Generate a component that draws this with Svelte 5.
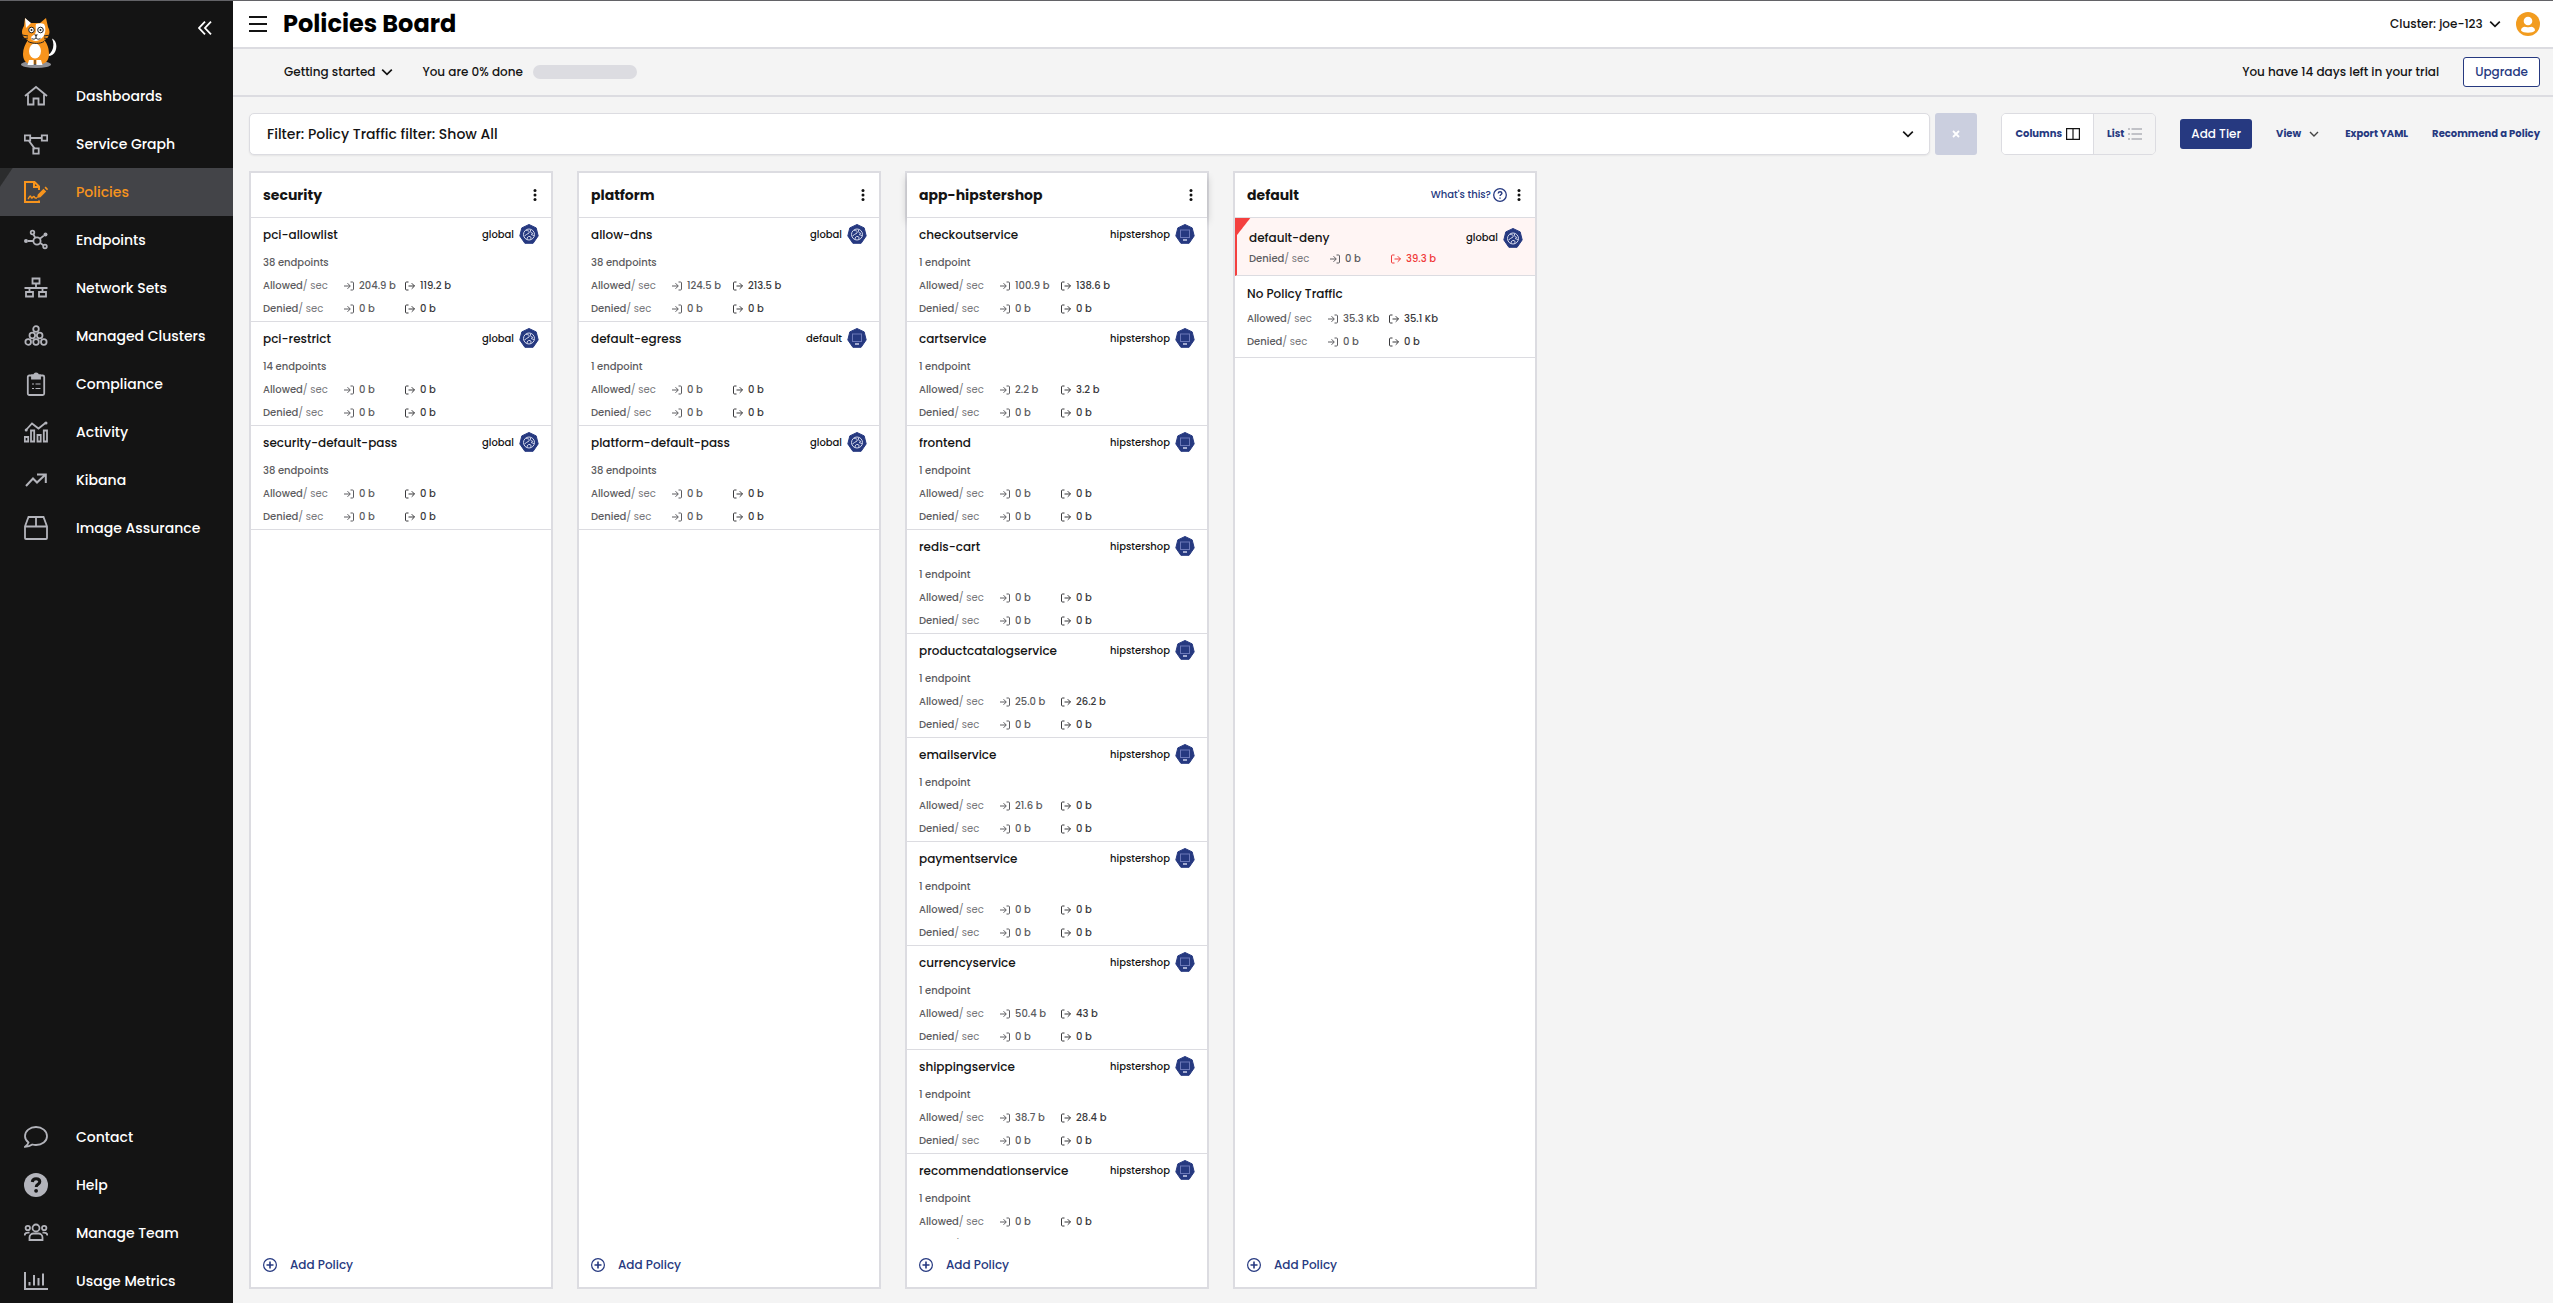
<script>
  const mainNav = [
    ['Dashboards', 'home'],
    ['Service Graph', 'graph'],
    ['Policies', 'policies'],
    ['Endpoints', 'endpoints'],
    ['Network Sets', 'network'],
    ['Managed Clusters', 'clusters'],
    ['Compliance', 'compliance'],
    ['Activity', 'activity'],
    ['Kibana', 'kibana'],
    ['Image Assurance', 'image']
  ];
  const footNav = [
    ['Contact', 'contact'],
    ['Help', 'help'],
    ['Manage Team', 'team'],
    ['Usage Metrics', 'usage']
  ];

  const card = (name, endpoints, scope, allowedIn = '0 b', allowedOut = '0 b') => ({
    name,
    endpoints,
    scope,
    rates: [
      ['Allowed', allowedIn, allowedOut],
      ['Denied', '0 b', '0 b']
    ]
  });

  const tiers = [
    {
      name: 'security',
      cards: [
        card('pci-allowlist', '38 endpoints', 'global', '204.9 b', '119.2 b'),
        card('pci-restrict', '14 endpoints', 'global'),
        card('security-default-pass', '38 endpoints', 'global')
      ]
    },
    {
      name: 'platform',
      cards: [
        card('allow-dns', '38 endpoints', 'global', '124.5 b', '213.5 b'),
        card('default-egress', '1 endpoint', 'default'),
        card('platform-default-pass', '38 endpoints', 'global')
      ]
    },
    {
      name: 'app-hipstershop',
      raised: true,
      cards: [
        card('checkoutservice', '1 endpoint', 'hipstershop', '100.9 b', '138.6 b'),
        card('cartservice', '1 endpoint', 'hipstershop', '2.2 b', '3.2 b'),
        card('frontend', '1 endpoint', 'hipstershop'),
        card('redis-cart', '1 endpoint', 'hipstershop'),
        card('productcatalogservice', '1 endpoint', 'hipstershop', '25.0 b', '26.2 b'),
        card('emailservice', '1 endpoint', 'hipstershop', '21.6 b', '0 b'),
        card('paymentservice', '1 endpoint', 'hipstershop'),
        card('currencyservice', '1 endpoint', 'hipstershop', '50.4 b', '43 b'),
        card('shippingservice', '1 endpoint', 'hipstershop', '38.7 b', '28.4 b'),
        card('recommendationservice', '1 endpoint', 'hipstershop')
      ]
    },
    {
      name: 'default',
      help: true,
      cards: [
        { name: 'default-deny', scope: 'global', alert: true, rates: [['Denied', '0 b', '39.3 b']] },
        {
          name: 'No Policy Traffic',
          plain: true,
          rates: [
            ['Allowed', '35.3 Kb', '35.1 Kb'],
            ['Denied', '0 b', '0 b']
          ]
        }
      ]
    }
  ];
</script>

{#snippet chevron(size)}
  <svg class="line" width={size} height={size} viewBox="0 0 10 10" aria-hidden="true"><path d="M1 3l4 4 4-4" stroke-width="1.4" /></svg>
{/snippet}

{#snippet navIcon(kind)}
  <svg class="line nav-icon" width="24" height="24" viewBox="0 0 24 24" aria-hidden="true">
    {#if kind === 'home'}
      <path d="M1 12L12 3l11 9M4 10.500V20.500h5.500v-6h5v6H20V10.500" />
    {:else if kind === 'graph'}
      <path d="M6 6h12M5 9l6 8" stroke-width="2" />
      <path d="M.8 3.300h5.400v5.400H.8zM17.800 3.300h5.400v5.400h-5.400zM9.300 16.300h5.400v5.400H9.300z" />
    {:else if kind === 'policies'}
      <path d="M15 20.500v1.500H1V2h9.500l4.500 4.500V10M10 2v5h5" stroke-width="2" />
      <path d="M4 19c1-1 1.500-3 2.300-3 1 0 .5 2 1.500 2s1-1.500 2-1.500.5 1.500 1.700 1.500h1.500" stroke-width="1.400" />
      <path d="M13 18l.8-3.500 5.700-5.700 2.700 2.700-5.700 5.700zM20.500 7.800l1.200-1.200 2.500 2.500-1.200 1.200z" fill="currentColor" stroke="none" />
    {:else if kind === 'endpoints'}
      <circle cx="13" cy="13" r="3.600" />
      <circle cx="8.500" cy="4.500" r="1.800" />
      <circle cx="21" cy="18.500" r="1.800" />
      <circle cx="21.500" cy="6.500" r="2" fill="currentColor" stroke="none" />
      <circle cx="2" cy="13" r="2" fill="currentColor" stroke="none" />
      <path d="M9.300 6.200l2 3.700M15.800 10.800l4-3.200M16.200 15l3.200 2.300M4 13h5.500" />
    {:else if kind === 'network'}
      <path d="M8.500 2.500h7v5h-7zM12 8v4M.5 12h23M5.500 12v4M18.500 12v4M2 16h7v4.500H2zM15 16h7v4.500h-7z" />
    {:else if kind === 'clusters'}
      <circle cx="12" cy="5" r="2.800" /><circle cx="8.300" cy="11.500" r="2.800" /><circle cx="15.700" cy="11.500" r="2.800" />
      <circle cx="4.200" cy="18" r="2.800" /><circle cx="12" cy="18" r="2.800" /><circle cx="19.800" cy="18" r="2.800" />
    {:else if kind === 'compliance'}
      <rect x="3.800" y="3.500" width="16.400" height="19.500" rx="1.500" />
      <path d="M8 6.500v-3h2a2 2 0 0 1 4 0h2v3z" fill="currentColor" />
      <path d="M8 12h2M11.500 12h5M8 16.500h2M11.500 16.500h5" stroke-width="1.200" />
    {:else if kind === 'activity'}
      <path d="M2 10l6-6.500 6.500 5L22 2.500" stroke-width="1.800" />
      <circle cx="2.200" cy="10" r="1.500" fill="currentColor" stroke="none" /><circle cx="22" cy="3" r="1.500" fill="currentColor" stroke="none" />
      <path d="M.8 17h3.400v4.500H.8zM7 10.500h3.200v11H7zM13.500 15h3.200v6.500h-3.200zM19.800 10.500h3.200v11h-3.200z" />
    {:else if kind === 'kibana'}
      <path d="M2 18l7-7.500 4 4L21.500 6.500M13 6.500h8.800V15" stroke-width="2" />
    {:else if kind === 'image'}
      <path d="M1 10.500V22a1 1 0 0 0 1 1h20a1 1 0 0 0 1-1V10.500L19.500 1h-15zM1 10.500h22M12 1v9.500" />
    {:else if kind === 'contact'}
      <path d="M4.500 17.500C2.300 15.800 1 13.500 1 11.200 1 6 6 2 12 2s11 4 11 9.200-5 8.800-11 8.800c-1.300 0-2.600-.2-3.700-.5C6.300 21 4 21.800 1 21.800c2-1.300 3-2.700 3.500-4.300z" />
    {:else if kind === 'help'}
      <circle cx="12" cy="12" r="12" fill="currentColor" stroke="none" />
      <path d="M8.300 9c.2-2 1.700-3.200 3.800-3.200s3.700 1.200 3.700 3c0 2.600-3.600 2.500-3.600 5.200" stroke="#141414" stroke-width="3" />
      <circle cx="12.100" cy="17.800" r="1.900" fill="#141414" stroke="none" />
    {:else if kind === 'team'}
      <circle cx="12" cy="7" r="3.500" /><circle cx="3.800" cy="7" r="2.200" /><circle cx="20.200" cy="7" r="2.200" />
      <path d="M5.500 19v-2.500c0-2.500 2-4 4-4h5c2 0 4 1.500 4 4V19zM.6 14.500c0-1.700 1.200-2.800 3.400-2.800h1.500M23.400 14.500c0-1.700-1.200-2.800-3.400-2.800h-1.500" />
    {:else}
      <path d="M1 3v17h23" stroke-width="2" />
      <path d="M5.500 13v3.500M10 6v10.500M14.500 9v7.500M19 4.500v12" stroke-width="2" />
    {/if}
  </svg>
{/snippet}

{#snippet scopeIcon(scope)}
  <svg class="scope-icon" width="20" height="20" viewBox="0 0 20 20" aria-hidden="true">
    <path d="M10 .5l7.200 3.400 2 8L14.100 19.300H5.900L.8 11.900l2-8z" fill="#263980" stroke="#263980" stroke-linejoin="round" />
    {#if scope === 'global'}
      <g fill="none" stroke="#d5d9ec">
        <circle cx="10" cy="10.500" r="5.500" />
        <path d="M7 6.500c2 0 4 .5 3 2.500l-2.500 1.500-2 1.500M11.500 6c-.5 2.500 1 3 2.500 3.500M8 15.500c0-2 1-3.500 3-3 1.500.5 1 2 .5 3M12 10.500l3 1" />
      </g>
    {:else}
      <rect x="5.500" y="6" width="9" height="7.500" fill="none" stroke="#6b78b8" />
      <path d="M8 16h4" stroke="#c3c9e4" stroke-width="1.600" />
    {/if}
  </svg>
{/snippet}

{#snippet arrowIn()}
  <svg class="line" width="10" height="10" viewBox="0 0 10 10" aria-hidden="true"><path d="M0 5h6M3.500 2.200L6.300 5 3.500 7.800M6.500 1h2q1 0 1 1v6q0 1-1 1h-2" /></svg>
{/snippet}

{#snippet arrowOut()}
  <svg class="line" width="10" height="10" viewBox="0 0 10 10" aria-hidden="true"><path d="M3.500 5h6M6.700 2.200L9.500 5 6.700 7.800M3.500 1h-2q-1 0-1 1v6q0 1 1 1h2" /></svg>
{/snippet}

<div class="app">
  <aside class="sidebar">
    <div class="brand">
      <svg width="36" height="52" viewBox="0 0 36 52" role="img" aria-label="Home">
        <ellipse cx="15" cy="47.500" rx="15" ry="3.500" fill="#8f9096" />
        <path d="M27 38c5-3 7-10 4-16.500 4 2 5.500 7 3.500 12.500-1.500 3.500-4 5-7.500 5z" fill="#fff" />
        <path d="M4 1l5 5h10l6-5 2 9c2 3 2 7 0 10-1 2-3 3-4 3 4 4 5 10 5 14 0 5-2 9-7 10H9c-5-1-7-5-7-10 0-5 2-10 5-14-3-1-6-4-6-8 0-3 1-4 2-6z" fill="#f7941d" />
        <path d="M4 1l6 5-5 5z" fill="#fff" />
        <path d="M15 7c3-1 6-1 8 0 2 3 2 9-1 13-2 2-5 4-7 4s-5-1-5-3 3-3 4-4c2-3 0-7 1-10z" fill="#fff" />
        <ellipse cx="14" cy="34" rx="6" ry="7.500" fill="#fff" />
        <path d="M8 43h4.500v5H6.500zM15.500 43H20l1.500 5h-6z" fill="#fff" />
        <g fill="#fff" stroke="#222"><circle cx="10.500" cy="13" r="2.800" /><circle cx="19.500" cy="13" r="2.800" /></g>
        <circle cx="10.500" cy="13" r="1" fill="#222" /><circle cx="19.500" cy="13" r="1" fill="#222" />
        <path d="M13 17.500h4l-2 2z" fill="#222" />
        <path d="M15 19v2M15 21c-2 2-4 1-4.500 0M15 21c2 2 4 1 4.500 0M1 18l6 1M1 22l6-1M29 18l-6 1M29 22l-6-1M7 24.500c5 2.500 12 2.500 16 0M14 43v5" fill="none" stroke="#222" />
      </svg>
      <button class="bare collapse" aria-label="Collapse menu">
        <svg class="line" width="14" height="14" viewBox="0 0 14 14" aria-hidden="true"><path d="M7 .7L1 7l6 6.300M13 .7L7 7l6 6.300" stroke-width="1.800" /></svg>
      </button>
    </div>
    <nav aria-label="Main">
      {#each mainNav as [label, icon]}
        <a href="#{icon}" class="nav-link" class:active={icon === 'policies'}>{@render navIcon(icon)}<span>{label}</span></a>
      {/each}
    </nav>
    <nav class="foot" aria-label="Support">
      {#each footNav as [label, icon]}
        <a href="#{icon}" class="nav-link">{@render navIcon(icon)}<span>{label}</span></a>
      {/each}
    </nav>
  </aside>

  <div class="main">
    <header class="bar">
      <button class="bare" aria-label="Toggle menu">
        <svg class="line" width="18" height="16" viewBox="0 0 18 16" aria-hidden="true"><path d="M0 1h18M0 8h18M0 15h18" stroke-width="2" /></svg>
      </button>
      <h1>Policies Board</h1>
      <div class="picker push">
        <select aria-label="Cluster"><option>Cluster: joe-123</option></select>
        {@render chevron(12)}
      </div>
      <button class="bare avatar" aria-label="Account">
        <svg width="24" height="24" viewBox="0 0 24 24" aria-hidden="true"><circle cx="12" cy="12" r="12" fill="#f29c1f" /><circle cx="12" cy="9" r="4.300" fill="#fff" /><path d="M5 18.500c0-2.500 2-3.700 4-3.700 1 .6 5 .6 6 0 2 0 4 1.200 4 3.700-2 3-12 3-14 0z" fill="#fff" /></svg>
      </button>
    </header>

    <div class="bar trial">
      <button class="bare started">Getting started {@render chevron(12)}</button>
      <label class="done">You are 0% done <progress value="0" max="100"></progress></label>
      <span class="push">You have 14 days left in your trial</span>
      <button class="outline">Upgrade</button>
    </div>

    <div class="tools">
      <div class="filter">
        <select aria-label="Policy filter"><option>Filter: Policy Traffic filter: Show All</option></select>
        {@render chevron(12)}
      </div>
      <button class="clear" aria-label="Clear filter">
        <svg class="line" width="8" height="8" viewBox="0 0 8 8" aria-hidden="true"><path d="M1 1l6 6M7 1L1 7" stroke-width="1.800" /></svg>
      </button>
      <div class="toggle" role="group" aria-label="Layout">
        <button class="on" aria-pressed="true">Columns
          <svg class="line" width="14" height="12" viewBox="0 0 14 12" aria-hidden="true"><path d="M.6.600h12.800v10.800H.6zM7 .600v10.800" stroke="#141414" stroke-width="1.200" /></svg>
        </button>
        <button aria-pressed="false">List
          <svg class="line" width="14" height="12" viewBox="0 0 14 12" aria-hidden="true"><path d="M0 1h2M3.500 1H14M0 6h2M3.500 6H14M0 11h2M3.500 11H14" stroke="#b0b1b8" stroke-width="1.400" /></svg>
        </button>
      </div>
      <button class="solid">Add Tier</button>
      <button class="bare link">View <span class="dim">{@render chevron(10)}</span></button>
      <a class="link" href="#export">Export YAML</a>
      <a class="link" href="#recommend">Recommend a Policy</a>
    </div>

    <main class="board">
      {#each tiers as tier}
        <section class="tier">
          <header class="tier-head" class:raised={tier.raised}>
            <h2>{tier.name}</h2>
            {#if tier.help}
              <a class="whats" href="#help">What's this?
                <svg class="line" width="14" height="14" viewBox="0 0 14 14" aria-hidden="true"><circle cx="7" cy="7" r="6.300" stroke-width="1.300" /><path d="M5.200 5.500c.1-1.200.8-1.800 1.900-1.800s1.800.6 1.800 1.500c0 1.300-1.800 1.300-1.800 2.800M7 9.400v1.300" stroke-width="1.400" /></svg>
              </a>
            {/if}
            <button class="bare dots" aria-label="{tier.name} options">
              <svg width="4" height="12" viewBox="0 0 4 12" aria-hidden="true"><g fill="#111"><circle cx="2" cy="1.500" r="1.500" /><circle cx="2" cy="6" r="1.500" /><circle cx="2" cy="10.500" r="1.500" /></g></svg>
            </button>
          </header>
          <div class="cards">
            {#each tier.cards as c}
              <article class="card" class:alert={c.alert} class:plain={c.plain}>
                <div class="card-head">
                  <h3>{c.name}</h3>
                  {#if c.scope}<span class="scope">{c.scope}</span>{@render scopeIcon(c.scope)}{/if}
                </div>
                {#if c.endpoints}<p>{c.endpoints}</p>{/if}
                {#each c.rates as [kind, inbound, outbound]}
                  <div class="rate">
                    <span>{kind}<i>/ sec</i></span>
                    <span class="value">{@render arrowIn()}{inbound}</span>
                    <span class="value out">{@render arrowOut()}{outbound}</span>
                  </div>
                {/each}
              </article>
            {/each}
          </div>
          <button class="bare add">
            <svg class="line" width="14" height="14" viewBox="0 0 14 14" aria-hidden="true"><circle cx="7" cy="7" r="6.400" stroke-width="1.200" /><path d="M7 3.500v7M3.500 7h7" stroke-width="1.600" /></svg>
            Add Policy
          </button>
        </section>
      {/each}
    </main>
  </div>
</div>

<style>
  :global(body) { margin: 0; }
  .app, .app :global(*) { box-sizing: border-box; }
  .app {
    display: flex;
    height: 100vh;
    overflow: hidden;
    border-top: 1px solid #636367;
    background: #f4f4f4;
    color: #141414;
    font: 500 12px/20px Poppins, Inter, "Open Sans", sans-serif;
  }
  h1, h2, h3, p { margin: 0; }
  button, select { font: inherit; color: inherit; cursor: pointer; }
  button, a { white-space: nowrap; }
  a { color: inherit; text-decoration: none; }
  svg { display: block; flex: none; }
  .line { fill: none; stroke: currentColor; }
  .bare { display: flex; align-items: center; padding: 0; border: 0; background: none; }
  .push { margin-left: auto; }

  .sidebar { display: flex; flex: none; flex-direction: column; width: 233px; background: #141414; color: #fff; }
  .brand { display: flex; flex: none; align-items: flex-start; justify-content: space-between; height: 71px; padding: 16px 21px 0; }
  .collapse { margin-top: 4px; }
  .nav-link { display: flex; align-items: center; gap: 28px; height: 48px; padding-left: 24px; font-size: 14px; }
  .nav-icon { color: #b3b4bb; stroke-width: 1.8; }
  .active { background: linear-gradient(124deg, #2b2c2d 10px, #434448 11px); color: #f7941d; }
  .active .nav-icon { color: #f7941d; }
  .foot { margin: auto 0 -2px; }

  .main { display: flex; flex: 1; flex-direction: column; min-width: 0; }
  .bar { display: flex; flex: none; align-items: center; height: 48px; padding: 0 13px 0 16px; border-bottom: 2px solid #dcdce1; background: #fff; }
  h1 { margin-left: 16px; color: #000; font-size: 24px; font-weight: 700; line-height: 32px; }
  select { padding: 0; border: 0; outline: 0; appearance: none; background: none; }
  .picker { display: flex; align-items: center; gap: 6px; }
  .avatar { margin-left: 15px; }
  .trial { padding-left: 51px; background: #f4f4f4; }
  .started { gap: 6px; }
  .done { display: flex; align-items: center; gap: 10px; margin-left: 29px; }
  progress { width: 104px; height: 14px; border: 0; border-radius: 7px; overflow: hidden; appearance: none; background: #dcdce1; }
  progress::-webkit-progress-bar { background: #dcdce1; }
  .outline { height: 30px; margin-left: 24px; padding: 0 11px; border: 1px solid #263980; border-radius: 3px; background: #fff; color: #263980; }

  .tools { display: flex; flex: none; align-items: center; padding: 16px 13px 16px 16px; }
  .filter { display: grid; flex: 1; align-items: center; height: 42px; border: 1px solid #dcdce1; border-radius: 5px; background: #fff; box-shadow: 0 1px 2px #0001; }
  .filter select { grid-area: 1 / 1; height: 40px; padding: 0 40px 0 17px; font-size: 14px; }
  .filter :global(svg) { grid-area: 1 / 1; justify-self: end; margin-right: 15px; pointer-events: none; }
  .clear { display: grid; place-items: center; width: 42px; height: 42px; margin-left: 5px; padding: 0; border: 0; border-radius: 3px; background: #cbcfdf; color: #fff; }
  .toggle { display: flex; height: 42px; margin: 0 24px; border: 1px solid #dcdce1; border-radius: 5px; overflow: hidden; }
  .toggle button { display: flex; align-items: center; gap: 4px; padding: 0 13px; border: 0; background: #f4f4f4; color: #263980; font-size: 10px; font-weight: 700; }
  .toggle .on { border-right: 1px solid #dcdce1; background: #fff; }
  .solid { height: 30px; padding: 0 11px; border: 0; border-radius: 3px; background: #263980; color: #fff; }
  .link { margin-left: 24px; color: #263980; font-size: 10px; font-weight: 700; }
  .link.bare { gap: 8px; padding-right: 2px; }
  .dim { color: #444; }

  .board { display: flex; flex: 1; gap: 24px; min-height: 0; padding: 0 16px 14px; }
  .tier { display: flex; flex: none; flex-direction: column; width: 304px; border: 2px solid #dcdce1; background: #fff; }
  .tier-head { display: flex; flex: none; align-items: center; height: 45px; padding: 0 14px 0 12px; border-bottom: 1px solid #dcdce1; }
  .raised { box-shadow: 0 4px 8px #0003; clip-path: inset(0 -10px -12px); }
  .raised + .cards { position: relative; background: #fff; }
  h2 { flex: 1; font-size: 14px; font-weight: 700; }
  .whats { display: flex; align-items: center; gap: 2px; margin-right: 10px; color: #263980; font-size: 10px; }
  .cards { flex: 1; min-height: 0; overflow-y: auto; scrollbar-width: none; }
  .card { padding: 4px 12px 1px; border-bottom: 1px solid #dcdce1; color: #5c5c60; font-size: 10px; line-height: 23px; }
  .card-head { display: flex; align-items: center; height: 24px; margin-bottom: 5px; color: #141414; }
  h3 { flex: 1; font-size: 12px; font-weight: 500; }
  .scope { margin-right: 5px; }
  .rate { display: grid; grid-template-columns: 81px 61px 1fr; }
  .rate i { color: #77777b; font-style: normal; font-weight: 400; }
  .value { display: flex; align-items: center; gap: 5px; white-space: nowrap; }
  .out { color: #3a3a3d; }
  .alert { padding: 8px 12px; border-left: 2px solid #f4403f; background: linear-gradient(128deg, #f4403f 10px, #fff5f4 11px); line-height: 16px; }
  .alert .card-head { margin-bottom: 1px; }
  .alert .out { color: #f03a3a; }
  .plain { padding: 5px 12px 4px; }
  .plain .card-head { margin-bottom: 2px; }
  .add { flex: none; gap: 13px; height: 48px; padding: 4px 12px 0; color: #263980; }
</style>
